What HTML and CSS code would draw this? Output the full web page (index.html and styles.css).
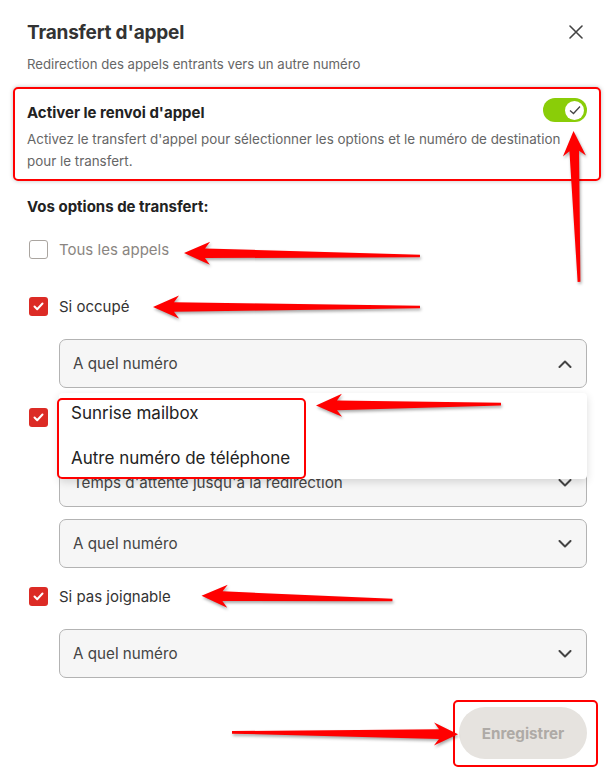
FILE: index.html
```html
<!DOCTYPE html>
<html lang="fr">
<head>
<meta charset="utf-8">
<title>Transfert d'appel</title>
<link rel="stylesheet" href="styles.css">
</head>
<body>
<div class="dialog">
  <header class="head">
    <h1 class="title">Transfert d'appel</h1>
    <button class="close" aria-label="Fermer">
      <svg width="14" height="14" viewBox="0 0 14 14"><path d="M1 1 L13 13 M13 1 L1 13" stroke="#444" stroke-width="1.6" fill="none" stroke-linecap="round"/></svg>
    </button>
  </header>
  <p class="subtitle">Redirection des appels entrants vers un autre numéro</p>

  <section class="toggle-card">
    <div class="toggle-row">
      <h2 class="toggle-title">Activer le renvoi d'appel</h2>
      <span class="switch"><span class="knob"><svg width="12" height="10" viewBox="0 0 12 10"><path d="M1 5.5 L4.5 8.5 L11 1.5" stroke="#444" stroke-width="1.3" fill="none"/></svg></span></span>
    </div>
    <p class="toggle-desc">Activez le transfert d'appel pour sélectionner les options et le numéro de destination pour le transfert.</p>
  </section>

  <h3 class="options-title">Vos options de transfert:</h3>

  <div class="opt opt-disabled row-1"><span class="cb"></span><span class="opt-label">Tous les appels</span></div>

  <div class="opt row-2"><span class="cb cb-on"><svg width="11" height="9" viewBox="0 0 11 9"><path d="M1.5 4.5 L4.2 7.2 L9.5 1.5" stroke="#fff" stroke-width="2" fill="none" stroke-linecap="round" stroke-linejoin="round"/></svg></span><span class="opt-label">Si occupé</span></div>

  <div class="select-wrap sel-1">
    <div class="select">
      <span>A quel numéro</span>
      <svg width="14" height="8" viewBox="0 0 14 8"><path d="M1.5 7 L7 1.5 L12.5 7" stroke="#444" stroke-width="2" fill="none" stroke-linecap="round" stroke-linejoin="round"/></svg>
    </div>
    <ul class="menu">
      <li>Sunrise mailbox</li>
      <li>Autre numéro de téléphone</li>
      <span class="menu-mark"></span>
    </ul>
  </div>

  <div class="opt row-3"><span class="cb cb-on"><svg width="11" height="9" viewBox="0 0 11 9"><path d="M1.5 4.5 L4.2 7.2 L9.5 1.5" stroke="#fff" stroke-width="2" fill="none" stroke-linecap="round" stroke-linejoin="round"/></svg></span></div>

  <div class="select-wrap sel-2">
    <div class="select">
      <span>Temps d'attente jusqu'à la redirection</span>
      <svg width="14" height="8" viewBox="0 0 14 8"><path d="M1.5 1 L7 6.5 L12.5 1" stroke="#444" stroke-width="2" fill="none" stroke-linecap="round" stroke-linejoin="round"/></svg>
    </div>
  </div>

  <div class="select-wrap sel-3">
    <div class="select">
      <span>A quel numéro</span>
      <svg width="14" height="8" viewBox="0 0 14 8"><path d="M1.5 1 L7 6.5 L12.5 1" stroke="#444" stroke-width="2" fill="none" stroke-linecap="round" stroke-linejoin="round"/></svg>
    </div>
  </div>

  <div class="opt row-4"><span class="cb cb-on"><svg width="11" height="9" viewBox="0 0 11 9"><path d="M1.5 4.5 L4.2 7.2 L9.5 1.5" stroke="#fff" stroke-width="2" fill="none" stroke-linecap="round" stroke-linejoin="round"/></svg></span><span class="opt-label">Si pas joignable</span></div>

  <div class="select-wrap sel-4">
    <div class="select">
      <span>A quel numéro</span>
      <svg width="14" height="8" viewBox="0 0 14 8"><path d="M1.5 1 L7 6.5 L12.5 1" stroke="#444" stroke-width="2" fill="none" stroke-linecap="round" stroke-linejoin="round"/></svg>
    </div>
  </div>

  <div class="actions">
    <div class="btn-wrap">
      <button class="save">Enregistrer</button>
      <span class="btn-mark"></span>
    </div>
  </div>

  <svg class="arrows" width="612" height="781" viewBox="0 0 612 781">
    <g fill="#ff0000">
      <polygon transform="translate(573.5 131) rotate(87.9)" points="0,0 25,-11.5 20,-4.8 151,-1.4 151,1.4 20,4.8 25,11.5"/>
      <polygon transform="translate(184 253) rotate(0.73)" points="0,0 26,-11.5 21,-4.8 236,-1.3 236,1.3 21,4.8 26,11.5"/>
      <polygon transform="translate(153 307) rotate(0)" points="0,0 26,-11.5 21,-4.8 267,-1.3 267,1.3 21,4.8 26,11.5"/>
      <polygon transform="translate(316 405.5) rotate(-0.43)" points="0,0 26,-11.5 21,-4.8 185,-1.3 185,1.3 21,4.8 26,11.5"/>
      <polygon transform="translate(201.5 595.7) rotate(1.29)" points="0,0 26,-11.5 21,-4.8 191,-1.3 191,1.3 21,4.8 26,11.5"/>
      <polygon transform="translate(458 734.3) rotate(180.5)" points="0,0 24,-11.5 19,-4.8 226,-1.3 226,1.3 19,4.8 24,11.5"/>
    </g>
  </svg>
</div>
</body>
</html>
```

FILE: styles.css
```css
* { box-sizing: border-box; margin: 0; padding: 0; }

body {
  width: 612px;
  height: 781px;
  overflow: hidden;
  background: #ffffff;
  font-family: Inter, Roboto, "Liberation Sans", sans-serif;
  color: #333;
}

.dialog {
  position: relative;
  height: 781px;
  padding: 20px 25px 0 27px;
  display: flex;
  flex-direction: column;
}

.head {
  display: flex;
  justify-content: space-between;
  align-items: center;
  height: 24px;
}

.title {
  font-size: 19px;
  font-weight: 700;
  color: #333;
  letter-spacing: -0.2px;
}

.close {
  width: 14px;
  height: 14px;
  border: 0;
  background: none;
  margin-right: 4px;
  display: flex;
}

.subtitle {
  margin-top: 11px;
  font-size: 13.2px;
  line-height: 18px;
  color: #666;
}

.toggle-card {
  margin: 14px -14px 0 -14px;
  border: 2px solid #ff0000;
  border-radius: 5px;
  padding: 9px 12px 7px 12px;
  box-shadow: 0 0 4px rgba(0, 0, 0, 0.25);
}

.toggle-row {
  display: flex;
  justify-content: space-between;
  align-items: flex-start;
}

.toggle-title {
  margin-top: 6px;
  font-size: 15px;
  line-height: 18px;
  font-weight: 700;
  color: #222;
}

.switch {
  width: 44px;
  height: 24px;
  border-radius: 12px;
  background: #8acd08;
  display: flex;
  align-items: center;
  justify-content: flex-end;
  padding-right: 3px;
}

.knob {
  width: 19px;
  height: 19px;
  border-radius: 50%;
  background: #fff;
  display: flex;
  align-items: center;
  justify-content: center;
}

.toggle-desc {
  margin-top: 6px;
  padding-right: 22px;
  font-size: 13.4px;
  line-height: 22px;
  color: #666;
}

.options-title {
  margin-top: 16px;
  font-size: 15px;
  line-height: 20px;
  font-weight: 700;
  color: #222;
}

.opt {
  display: flex;
  align-items: center;
  height: 19px;
  margin-left: 2px;
  font-size: 15px;
  color: #333;
}

.opt-label { margin-left: 11px; }

.opt-disabled { color: #8a8581; }

.cb {
  width: 19px;
  height: 19px;
  border-radius: 3px;
  border: 1.5px solid #aaa5a0;
  background: #fff;
  display: flex;
  align-items: center;
  justify-content: center;
  flex-shrink: 0;
}

.cb-on {
  border: 0;
  background: #dc2b25;
}

.row-1 { margin-top: 23px; }
.row-2 { margin-top: 38px; }
.row-3 { margin-top: 20px; }
.row-4 { margin-top: 19px; }

.select-wrap {
  position: relative;
  margin-left: 32px;
}

.sel-1 { margin-top: 23px; }
.sel-2 { margin-top: 31px; }
.sel-3 { margin-top: 12px; }
.sel-4 { margin-top: 23px; }

.select {
  height: 49px;
  border: 1.5px solid #b3b3b3;
  border-radius: 7px;
  background: #f6f6f6;
  display: flex;
  align-items: center;
  justify-content: space-between;
  padding: 0 14px 0 13px;
  font-size: 15.2px;
  color: #444;
}

.menu {
  position: absolute;
  top: calc(100% + 5px);
  left: 0;
  right: 0;
  height: 86px;
  list-style: none;
  background: #fff;
  border-radius: 4px;
  box-shadow: 0 3px 9px rgba(0, 0, 0, 0.14);
  z-index: 2;
}

.menu li {
  height: 40px;
  line-height: 40px;
  padding-left: 12px;
  font-size: 17px;
  color: #222;
}

.menu li + li { margin-top: 5px; }

.menu-mark {
  position: absolute;
  left: -2px;
  top: 5px;
  width: 249px;
  height: 81px;
  border: 2px solid #ff0000;
  border-radius: 5px;
}

.actions {
  margin-top: 29px;
  display: flex;
  justify-content: flex-end;
}

.btn-wrap { position: relative; }

.save {
  width: 128px;
  height: 52px;
  border: 0;
  border-radius: 26px;
  background: #e6e3df;
  font-family: Inter, Roboto, "Liberation Sans", sans-serif;
  font-size: 15.2px;
  font-weight: 700;
  color: #aeaaa6;
}

.btn-mark {
  position: absolute;
  top: -7px;
  bottom: -8px;
  left: -6px;
  right: -11px;
  border: 2px solid #ff0000;
  border-radius: 5px;
}

.arrows {
  position: absolute;
  top: 0;
  left: 0;
  pointer-events: none;
  z-index: 5;
  filter: drop-shadow(1px 2px 1.5px rgba(0, 0, 0, 0.35));
}
```
